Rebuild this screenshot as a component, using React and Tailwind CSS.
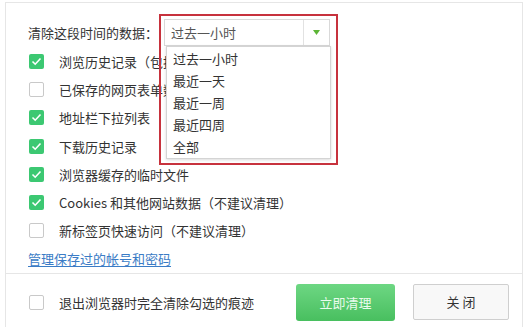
import React from 'react';

const items = [
  { label: '浏览历史记录（包括已输入的网址）', checked: true },
  { label: '已保存的网页表单数据', checked: false },
  { label: '地址栏下拉列表', checked: true },
  { label: '下载历史记录', checked: true },
  { label: '浏览器缓存的临时文件', checked: true },
  { label: 'Cookies 和其他网站数据（不建议清理）', checked: true },
  { label: '新标签页快速访问（不建议清理）', checked: false },
];

const ranges = ['过去一小时', '最近一天', '最近一周', '最近四周', '全部'];

const Check = ({ checked }) =>
  checked ? (
    <span className="flex h-[15px] w-[15px] shrink-0 items-center justify-center rounded-[2px] bg-[#3cc872]">
      <svg width="11" height="9" viewBox="0 0 11 9" fill="none">
        <path d="M1.5 4.5 L4.2 7.2 L9.5 1.5" stroke="#fff" strokeWidth="1.6" />
      </svg>
    </span>
  ) : (
    <span className="h-[15px] w-[15px] shrink-0 rounded-[2px] border border-[#c9c9c9] bg-white" />
  );

export default function App() {
  return (
    <div className="relative h-[327px] w-[526px] overflow-hidden bg-white text-[13px] text-[#333] [font-family:'Noto_Sans_CJK_SC','Microsoft_YaHei',sans-serif]">
      <div className="ml-[5px] mt-[2px] flex h-[325px] w-[518px] flex-col border-l border-r border-t border-[#e6e6e6]">
        <div className="pl-[22px] pt-[16px]">
          {/* time range row */}
          <div className="flex h-[27px] items-center">
            <span className="w-[136px] leading-none">清除这段时间的数据：</span>
            <div className="relative">
              <div className="flex h-[27px] w-[166px] items-center border border-[#d9d9d9] bg-white">
                <span className="flex-1 pl-[6px] leading-none text-[#555]">过去一小时</span>
                <span className="flex h-full w-[26px] items-center justify-center border-l border-[#e2e2e2]">
                  <svg width="7" height="5" viewBox="0 0 7 5">
                    <path d="M0 0 H7 L3.5 5 Z" fill="#5cb536" />
                  </svg>
                </span>
              </div>
              {/* open menu, drawn over the list below */}
              <div className="absolute left-[2px] top-[27px] z-10 flex w-[165px] flex-col border border-[#d4d4d4] bg-white pb-[1px] pt-[1px] shadow-[0_1px_3px_rgba(0,0,0,0.15)]">
                {ranges.map((r) => (
                  <div key={r} className="flex h-[21.8px] items-center pl-[6px] leading-none">
                    {r}
                  </div>
                ))}
              </div>
              {/* highlight frame */}
              <div className="pointer-events-none absolute left-[-5px] top-[-5px] z-20 h-[151px] w-[179px] border-2 border-[#c7323d]" />
            </div>
          </div>

          <div className="mt-[1px] flex flex-col">
            {items.map((it) => (
              <div key={it.label} className="flex h-[28.3px] items-center gap-[15px] pl-[1px]">
                <Check checked={it.checked} />
                <span className="whitespace-nowrap leading-none">{it.label}</span>
              </div>
            ))}
          </div>

          <div className="flex h-[26px] items-center">
            <a className="leading-none text-[#3b7cc6] underline underline-offset-2">管理保存过的帐号和密码</a>
          </div>
        </div>

        <div className="mt-[2px] flex flex-1 items-start border-t border-[#e6e6e6] pl-[23px] pr-[13px] pt-[10px]">
          <div className="flex h-[37px] flex-1 items-center gap-[15px]">
            <Check checked={false} />
            <span className="leading-none">退出浏览器时完全清除勾选的痕迹</span>
          </div>
          <button className="h-[37px] w-[99px] rounded-[3px] bg-gradient-to-b from-[#6dd783] to-[#48bf5f] text-[13px] text-[#eafbee]">
            立即清理
          </button>
          <button className="ml-[18px] h-[36px] w-[96px] rounded-[2px] border border-[#cfcfcf] bg-[#f8f8f8] text-[13px] text-[#333]">
            关 闭
          </button>
        </div>
      </div>
    </div>
  );
}
